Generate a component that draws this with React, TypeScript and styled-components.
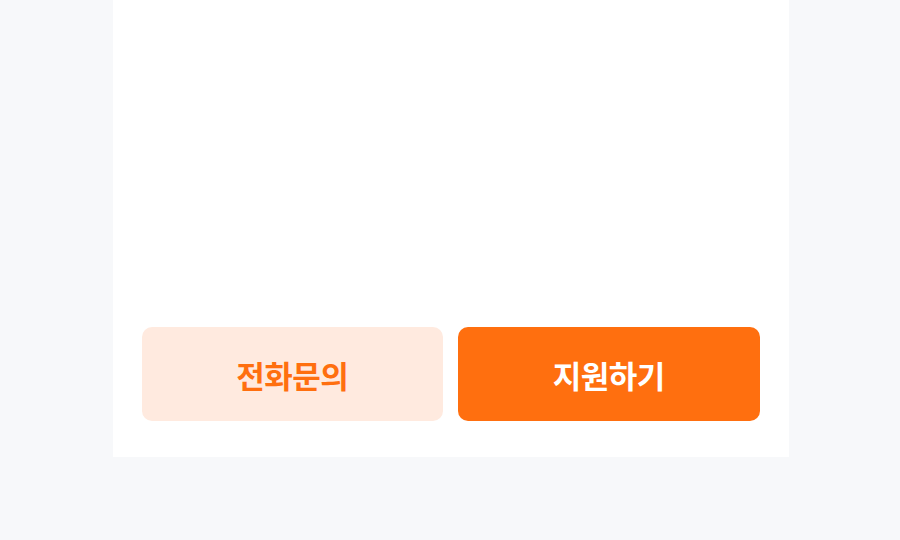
import { createGlobalStyle, styled } from "styled-components"

const GlobalStyle = createGlobalStyle`
  * { box-sizing: border-box; }
  body {
    margin: 0;
    background: #f7f8fa;
    font-family: "Noto Sans CJK KR", "Noto Sans", sans-serif;
  }
`

export default function App() {
  return (
    <>
      <GlobalStyle />
      <Page>
        <Sheet>
          <Body />
          <ActionBar>
            <ActionButton $variant="soft">전화문의</ActionButton>
            <ActionButton $variant="solid">지원하기</ActionButton>
          </ActionBar>
        </Sheet>
      </Page>
    </>
  )
}

const Page = styled.div`
  width: 900px;
  height: 540px;
  display: flex;
  justify-content: center;
  padding-left: 1px;
`

const Sheet = styled.div`
  width: 676px;
  height: 457px;
  background: #ffffff;
  display: flex;
  flex-direction: column;
  padding: 0 29px 36px;
`

const Body = styled.div`
  flex: 1;
`

const ActionBar = styled.div`
  display: grid;
  grid-template-columns: 1fr 1fr;
  gap: 15px;
`

const ActionButton = styled.button<{ $variant: "soft" | "solid" }>`
  height: 94px;
  border: none;
  border-radius: 10px;
  padding: 0;
  font-family: "Noto Sans CJK KR", sans-serif;
  font-size: 31px;
  font-weight: 700;
  letter-spacing: -0.5px;
  cursor: pointer;
  background: ${(p) => (p.$variant === "solid" ? "#ff6f0f" : "#ffeadf")};
  color: ${(p) => (p.$variant === "solid" ? "#ffffff" : "#ff6f0f")};
`
